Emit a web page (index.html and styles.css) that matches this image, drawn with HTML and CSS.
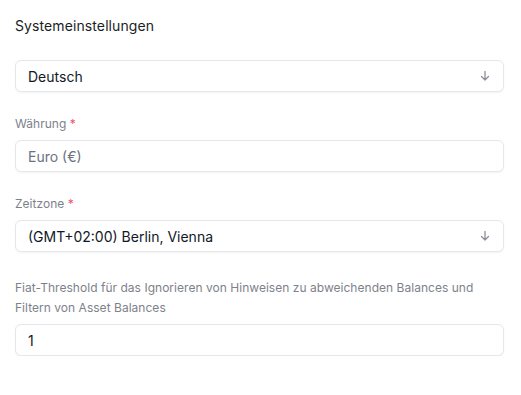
FILE: index.html
```html
<!DOCTYPE html>
<html lang="de">
<head>
<meta charset="utf-8">
<link rel="stylesheet" href="styles.css">
</head>
<body>
<div class="panel">
  <h2 class="title">Systemeinstellungen</h2>
  <div class="field first">
    <div class="control select">
      <span class="value">Deutsch</span>
      <svg class="arrow" width="12" height="12" viewBox="0 0 12 12"><path d="M6 1.5v8.5M2.5 6.5L6 10l3.5-3.5" fill="none" stroke="#8a8f98" stroke-width="1.3" stroke-linecap="round" stroke-linejoin="round"/></svg>
    </div>
  </div>
  <div class="field">
    <label class="label">Währung <span class="req">*</span></label>
    <div class="control">
      <span class="value muted">Euro (€)</span>
    </div>
  </div>
  <div class="field">
    <label class="label">Zeitzone <span class="req">*</span></label>
    <div class="control select">
      <span class="value">(GMT+02:00) Berlin, Vienna</span>
      <svg class="arrow" width="12" height="12" viewBox="0 0 12 12"><path d="M6 1.5v8.5M2.5 6.5L6 10l3.5-3.5" fill="none" stroke="#8a8f98" stroke-width="1.3" stroke-linecap="round" stroke-linejoin="round"/></svg>
    </div>
  </div>
  <div class="field wide">
    <label class="label">Fiat-Threshold für das Ignorieren von Hinweisen zu abweichenden Balances und Filtern von Asset Balances</label>
    <div class="control">
      <span class="value">1</span>
    </div>
  </div>
</div>
</body>
</html>
```

FILE: styles.css
```css
* { box-sizing: border-box; }
body {
  margin: 0;
  background: #ffffff;
  font-family: Inter, "Noto Sans", sans-serif;
  color: #111827;
}
.panel {
  padding: 16px 17px 0 15px;
  display: flex;
  flex-direction: column;
}
.title {
  margin: 0;
  font-size: 14px;
  line-height: 20px;
  font-weight: 400;
  letter-spacing: 0.1px;
  color: #1a1d24;
}
.field {
  display: flex;
  flex-direction: column;
  gap: 6px;
  margin-top: 22px;
}
.field.first { margin-top: 24px; }
.field.wide { margin-top: 26px; }
.label {
  font-size: 12px;
  line-height: 20px;
  color: #7d828a;
  letter-spacing: 0.03px;
}
.req { color: #f0506e; }
.control {
  height: 32px;
  border: 1px solid #e5e7eb;
  border-radius: 6px;
  box-shadow: 0 1px 2px rgba(0,0,0,0.05);
  display: flex;
  align-items: center;
  padding: 0 12px;
  font-size: 14px;
  background: #fff;
}
.select { justify-content: space-between; }
.value { color: #111827; }
.value.muted { color: #6b7280; }
.arrow { display: block; }
```
